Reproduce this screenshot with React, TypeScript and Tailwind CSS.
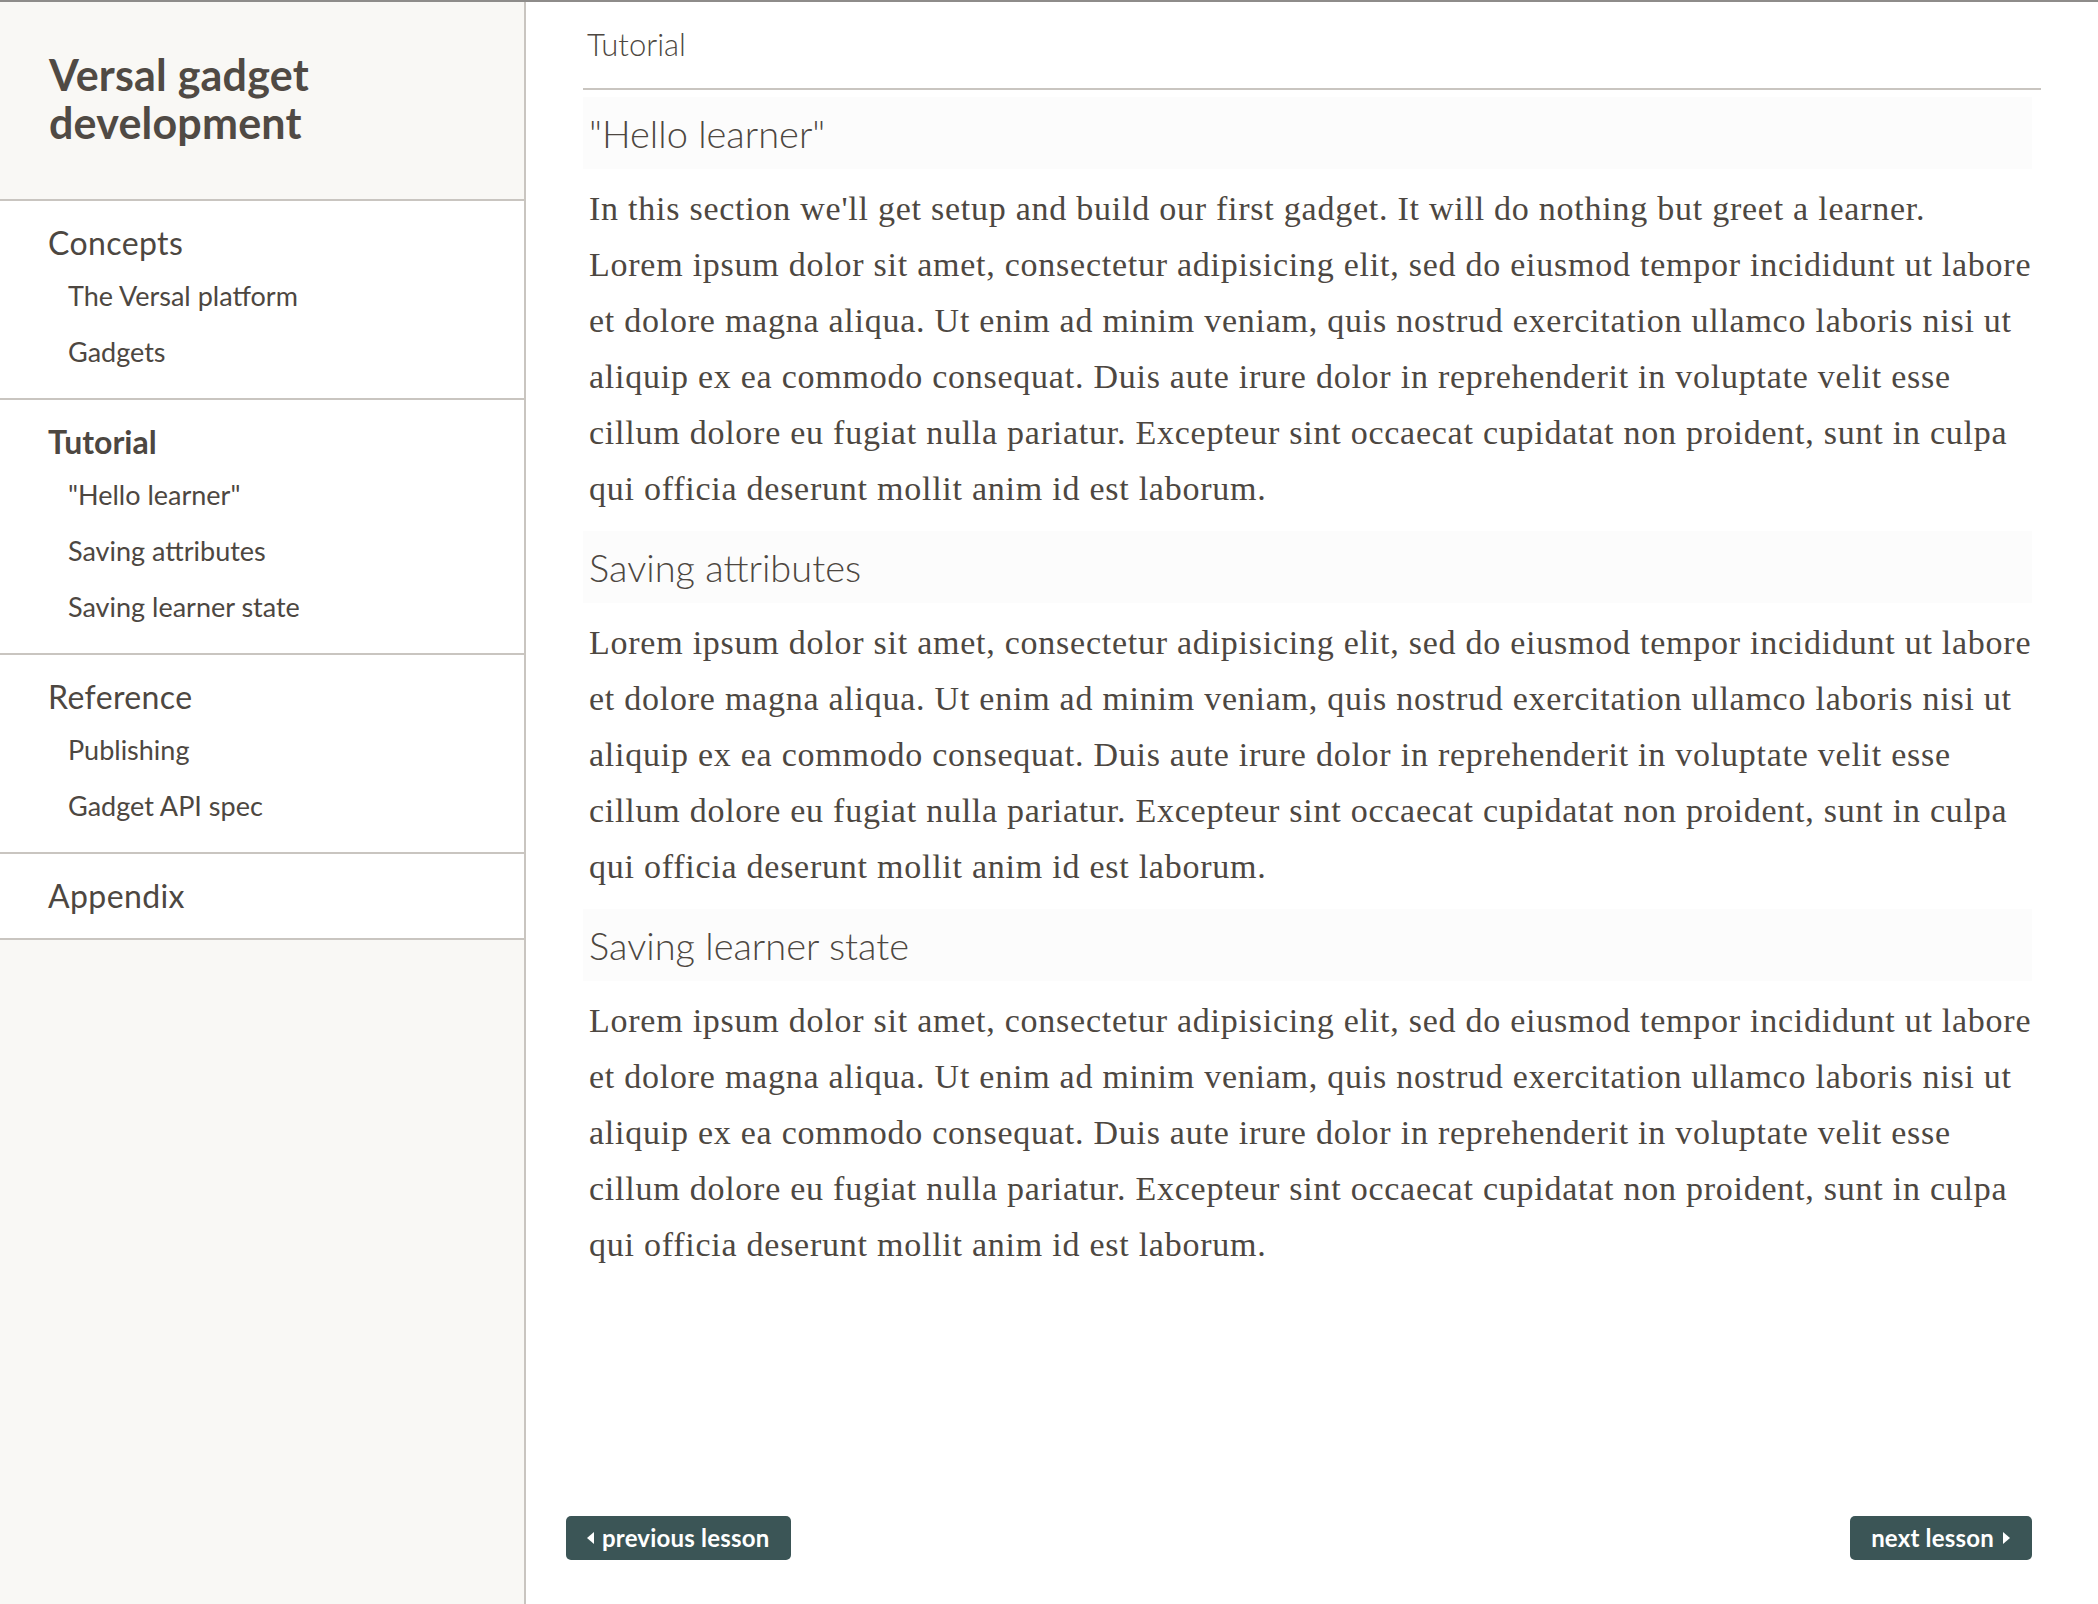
const LOREM =
  "Lorem ipsum dolor sit amet, consectetur adipisicing elit, sed do eiusmod tempor incididunt ut labore et dolore magna aliqua. Ut enim ad minim veniam, quis nostrud exercitation ullamco laboris nisi ut aliquip ex ea commodo consequat. Duis aute irure dolor in reprehenderit in voluptate velit esse cillum dolore eu fugiat nulla pariatur. Excepteur sint occaecat cupidatat non proident, sunt in culpa qui officia deserunt mollit anim id est laborum.";

type NavSection = { title: string; active?: boolean; items: string[] };

const nav: NavSection[] = [
  { title: "Concepts", items: ["The Versal platform", "Gadgets"] },
  { title: "Tutorial", active: true, items: ['"Hello learner"', "Saving attributes", "Saving learner state"] },
  { title: "Reference", items: ["Publishing", "Gadget API spec"] },
  { title: "Appendix", items: [] },
];

function Caret({ dir }: { dir: "left" | "right" }) {
  return (
    <svg width="7" height="12" viewBox="0 0 7 12" className="shrink-0">
      {dir === "left" ? (
        <polygon points="7,0 7,12 0,6" fill="currentColor" />
      ) : (
        <polygon points="0,0 0,12 7,6" fill="currentColor" />
      )}
    </svg>
  );
}

function Heading({ title, first }: { title: string; first?: boolean }) {
  return (
    <h2
      className={`${first ? "mt-[7px]" : "mt-[14px]"} mr-[9px] h-[72px] bg-[#fcfcfc] pl-[6px] text-[38px] font-light leading-[72px]`}
    >
      {title}
    </h2>
  );
}

const body = "mt-[12px] pl-[6px] font-['Liberation_Serif',serif] text-[34px] leading-[56px] tracking-[0.75px]";

export default function App() {
  return (
    <div className="flex min-h-screen border-t-2 border-[#8e8c8a] bg-white font-['Lato','Open_Sans',sans-serif] text-[#4d4741]">
      <aside className="flex w-[526px] shrink-0 flex-col border-r-2 border-[#c9c5c0] bg-[#f9f8f5]">
        <div className="border-b-2 border-[#c9c5c0] px-[49px] pb-[52px] pt-[49px]">
          <h1 className="text-[43px] font-bold leading-[48px] tracking-[0.2px] text-[#504a44]">
            Versal gadget
            <br />
            development
          </h1>
        </div>
        <nav className="bg-white">
          {nav.map((s) => (
            <div key={s.title} className="border-b-2 border-[#c9c5c0] pb-[17px] pt-[16px]">
              <div
                className={`pl-[48px] text-[32px] leading-[51px] ${s.active ? "font-bold" : "font-normal tracking-[0.4px]"}`}
              >
                {s.title}
              </div>
              {s.items.length > 0 && (
                <ul className="pb-[1px]">
                  {s.items.map((it) => (
                    <li key={it} className="pl-[68px] text-[27px] leading-[56px]">
                      {it}
                    </li>
                  ))}
                </ul>
              )}
            </div>
          ))}
        </nav>
      </aside>

      <main className="flex min-w-0 flex-1 flex-col">
        <div className="mx-[57px] pt-[22px]">
          <div className="pl-[4px] text-[31px] font-light leading-[40px]">Tutorial</div>
          <div className="mt-[24px] h-[2px] bg-[#c9c5c0]" />

          <Heading title={'"Hello learner"'} first />
          <div className={body}>
            <p>In this section we'll get setup and build our first gadget. It will do nothing but greet a learner.</p>
            <p>{LOREM}</p>
          </div>

          <Heading title="Saving attributes" />
          <p className={body}>{LOREM}</p>

          <Heading title="Saving learner state" />
          <p className={body}>{LOREM}</p>
        </div>

        <div className="mt-auto flex items-center justify-between pb-[44px] pl-[40px] pr-[66px]">
          <button className="flex h-[44px] items-center gap-[8px] rounded-[5px] bg-[#3b5556] pl-[21px] pr-[22px] text-[24px] font-bold tracking-[0.2px] text-white">
            <Caret dir="left" />
            previous lesson
          </button>
          <button className="flex h-[44px] items-center gap-[9px] rounded-[5px] bg-[#3b5556] pl-[21px] pr-[22px] text-[24px] font-bold tracking-[0.2px] text-white">
            next lesson
            <Caret dir="right" />
          </button>
        </div>
      </main>
    </div>
  );
}
